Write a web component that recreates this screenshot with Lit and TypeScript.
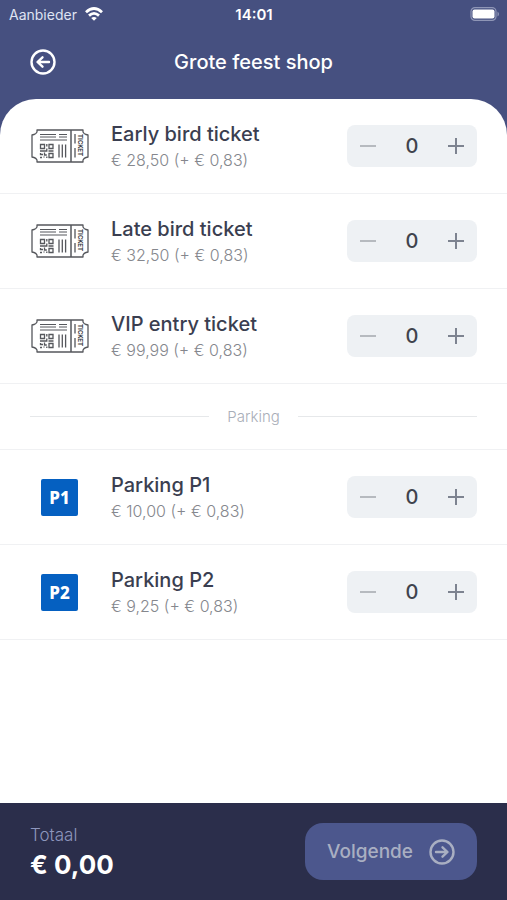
import { LitElement, html, svg, css } from "lit";
import { customElement, property, state } from "lit/decorators.js";

interface Item {
  id: string;
  name: string;
  price: string;
  badge?: string;
}

const FEE = "0,83";

const TICKETS: Item[] = [
  { id: "early", name: "Early bird ticket", price: "28,50" },
  { id: "late", name: "Late bird ticket", price: "32,50" },
  { id: "vip", name: "VIP entry ticket", price: "99,99" },
];

const PARKING: Item[] = [
  { id: "p1", name: "Parking P1", price: "10,00", badge: "P1" },
  { id: "p2", name: "Parking P2", price: "9,25", badge: "P2" },
];

const cents = (price: string) => Number(price.replace(",", ""));
const euros = (value: number) => (value / 100).toFixed(2).replace(".", ",");

const ticketIcon = html`<svg width="58" height="36" viewBox="0 0 58 36" fill="none" stroke="#55575c" stroke-width="1.3" aria-hidden="true">
  <path d="M6 2H52V4Q53 6 55 6.500L57 7V29L55 29.500Q53 30 52 32V34H6V32Q5 30 3 29.500L1 29V7L3 6.500Q5 6 6 4Z" stroke-linejoin="round" />
  <path d="M40 2V34" stroke-width="1.500" />
  <path d="M9 6.500H25M28 6.500H36M9 9H25M28 9H36M9 12H36" stroke-width="1" />
  <path d="M9.500 16.500H13.500V20.500H9.500ZM18 16.500H22V20.500H18ZM18 25.500H22V29.500H18Z" />
  <path d="M15.800 16V18.500M15.800 20.500V23H9M17.500 23H22.500M9.500 25V26.500H12M13.500 24.500V27H15.800M9 29.500H11M13 29.500V28.500M15.800 28.500V30" />
  <path d="M28 16.500V29.500M31.300 16.500V29.500M34.600 16.500V29.500M44 6V15.500M44 20V29.500" />
  <text x="0" y="0" transform="translate(47 6) rotate(90)" fill="#404247" stroke="none" font-family="Roboto, sans-serif" font-size="6.500" font-weight="700">TICKET</text>
</svg>`;

const arrowIcon = (direction: "left" | "right") => html`<svg width="26" height="26" viewBox="0 0 26 26" fill="none" stroke="currentColor" stroke-width="2.4" stroke-linecap="round" stroke-linejoin="round" aria-hidden="true">
  <circle cx="13" cy="13" r="11.500" />
  ${direction === "left"
    ? svg`<path d="M19 13H8M12.500 8.300L7.500 13L12.500 17.700" />`
    : svg`<path d="M7 13H18M13.500 8.300L18.500 13L13.500 17.700" />`}
</svg>`;

@customElement("shop-item")
export class ShopItem extends LitElement {
  @property({ attribute: false }) item!: Item;
  @property({ type: Number }) count = 0;

  static styles = css`
    :host {
      display: flex;
      align-items: center;
      box-sizing: border-box;
      min-height: 95px;
      padding: 0 30px;
      border-bottom: 1px solid #f0f1f3;
    }
    .picture {
      display: flex;
      justify-content: center;
      flex: none;
      width: 59px;
      margin-right: 22px;
    }
    .badge {
      width: 37px;
      border-radius: 2px;
      background: #0560c1;
      color: #fff;
      font: 800 17px/37px "Noto Sans", sans-serif;
      text-align: center;
    }
    .info {
      flex: 1;
      min-width: 0;
      padding-top: 2px;
    }
    .name {
      margin: 0;
      color: #3a3e50;
      font-size: 20px;
      font-weight: 500;
      line-height: 26px;
    }
    .price {
      margin: 0;
      color: #85878d;
      font-size: 16px;
      font-weight: 300;
      line-height: 26px;
    }
    .stepper {
      display: flex;
      align-items: center;
      flex: none;
      width: 130px;
      height: 42px;
      border-radius: 8px;
      background: #eef1f4;
    }
    .step {
      display: flex;
      align-items: center;
      justify-content: center;
      width: 42px;
      height: 42px;
      padding: 0;
      border: 0;
      background: none;
      color: #7d8390;
    }
    .step:disabled {
      color: #b6babf;
    }
    .count {
      flex: 1;
      color: #3f434d;
      font-size: 20px;
      font-weight: 500;
      text-align: center;
    }
  `;

  private step(delta: number) {
    this.dispatchEvent(new CustomEvent("step", { detail: delta }));
  }

  render() {
    const { name, price, badge } = this.item;
    return html`
      <div class="picture">${badge ? html`<span class="badge">${badge}</span>` : ticketIcon}</div>
      <div class="info">
        <h2 class="name">${name}</h2>
        <p class="price">€ ${price} (+ € ${FEE})</p>
      </div>
      <div class="stepper" role="group" aria-label=${name}>
        <button class="step" aria-label="Minder" ?disabled=${this.count === 0} @click=${() => this.step(-1)}>
          <svg width="16" height="16" viewBox="0 0 16 16" stroke="currentColor" stroke-width="2"><path d="M0 8H16" /></svg>
        </button>
        <output class="count">${this.count}</output>
        <button class="step" aria-label="Meer" @click=${() => this.step(1)}>
          <svg width="16" height="16" viewBox="0 0 16 16" stroke="currentColor" stroke-width="2"><path d="M0 8H16M8 0V16" /></svg>
        </button>
      </div>
    `;
  }
}

@customElement("app-root")
export class AppRoot extends LitElement {
  @state() private counts: Record<string, number> = {};

  static styles = css`
    :host {
      display: flex;
      flex-direction: column;
      min-height: 100vh;
      background: #465080;
      color: #fff;
      font-family: Inter, "Liberation Sans", sans-serif;
    }
    .status {
      display: grid;
      grid-template-columns: 1fr auto 1fr;
      align-items: center;
      height: 28px;
      padding: 0 8px 0 9px;
      box-sizing: border-box;
      font-size: 14px;
    }
    .carrier {
      display: flex;
      align-items: center;
      gap: 8px;
      color: #dfe3f2;
    }
    .clock {
      font-size: 15px;
      font-weight: 600;
    }
    .battery {
      justify-self: end;
    }
    .bar {
      display: grid;
      grid-template-columns: 26px 1fr 26px;
      align-items: center;
      height: 71px;
      padding: 0 30px 3px;
      box-sizing: border-box;
    }
    .back {
      display: flex;
      padding: 0;
      border: 0;
      background: none;
      color: #fff;
    }
    .title {
      margin: 0;
      font-size: 20px;
      font-weight: 500;
      line-height: 26px;
      text-align: center;
    }
    .sheet {
      flex: 1;
      border-radius: 36px 36px 0 0;
      background: #fff;
    }
    .divider {
      display: flex;
      align-items: center;
      gap: 18px;
      box-sizing: border-box;
      height: 66px;
      padding: 0 30px;
      border-bottom: 1px solid #f0f1f3;
      color: #a9aeb8;
      font-size: 15px;
      font-weight: 300;
    }
    .divider::before,
    .divider::after {
      content: "";
      flex: 1;
      height: 1px;
      background: #e6e8ea;
    }
    .footer {
      display: flex;
      align-items: center;
      justify-content: space-between;
      box-sizing: border-box;
      min-height: 97px;
      padding: 0 30px;
      background: #2b2e4b;
    }
    .label {
      margin: 0;
      color: #8e96bd;
      font-size: 17px;
      font-weight: 300;
      line-height: 26px;
    }
    .total {
      margin: 0;
      font-size: 26px;
      font-weight: 700;
      line-height: 34px;
    }
    .next {
      display: flex;
      align-items: center;
      justify-content: space-between;
      width: 172px;
      height: 57px;
      padding: 0 22px;
      border: 0;
      border-radius: 18px;
      background: #4c578d;
      color: #a9afc2;
      font-family: inherit;
      font-size: 19px;
      font-weight: 500;
    }
  `;

  private change(id: string, delta: number) {
    this.counts = { ...this.counts, [id]: Math.max(0, (this.counts[id] ?? 0) + delta) };
  }

  private row(item: Item) {
    return html`<shop-item
      .item=${item}
      .count=${this.counts[item.id] ?? 0}
      @step=${(e: CustomEvent<number>) => this.change(item.id, e.detail)}
    ></shop-item>`;
  }

  render() {
    const total = [...TICKETS, ...PARKING].reduce(
      (sum, item) => sum + (this.counts[item.id] ?? 0) * (cents(item.price) + cents(FEE)),
      0,
    );
    return html`
      <div class="status">
        <span class="carrier">
          Aanbieder
          <svg width="18" height="14" viewBox="0 0 18 14" fill="none" stroke="#fff" stroke-width="2.800" aria-hidden="true">
            <path d="M1 5.200Q9 -2.200 17 5.200M4 8.600Q9 4.200 14 8.600" />
            <path d="M9 13.800L6.200 11Q9 8.800 11.800 11Z" fill="#fff" stroke="none" />
          </svg>
        </span>
        <span class="clock">14:01</span>
        <svg class="battery" width="29" height="14" viewBox="0 0 29 14" aria-hidden="true">
          <rect x="1" y="0.600" width="25" height="12.800" rx="4" fill="none" stroke="#8f96b6" stroke-width="1.200" />
          <rect x="2.500" y="2.500" width="22" height="9" rx="2" fill="#fff" />
          <path d="M27.500 4.500Q29 5.500 29 7T27.500 9.500Z" fill="#8f96b6" />
        </svg>
      </div>
      <header class="bar">
        <button class="back" aria-label="Terug">${arrowIcon("left")}</button>
        <h1 class="title">Grote feest shop</h1>
      </header>
      <main class="sheet">
        ${TICKETS.map((item) => this.row(item))}
        <div class="divider">Parking</div>
        ${PARKING.map((item) => this.row(item))}
      </main>
      <footer class="footer">
        <div>
          <p class="label">Totaal</p>
          <p class="total">€ ${euros(total)}</p>
        </div>
        <button class="next" ?disabled=${total === 0}>Volgende ${arrowIcon("right")}</button>
      </footer>
    `;
  }
}
